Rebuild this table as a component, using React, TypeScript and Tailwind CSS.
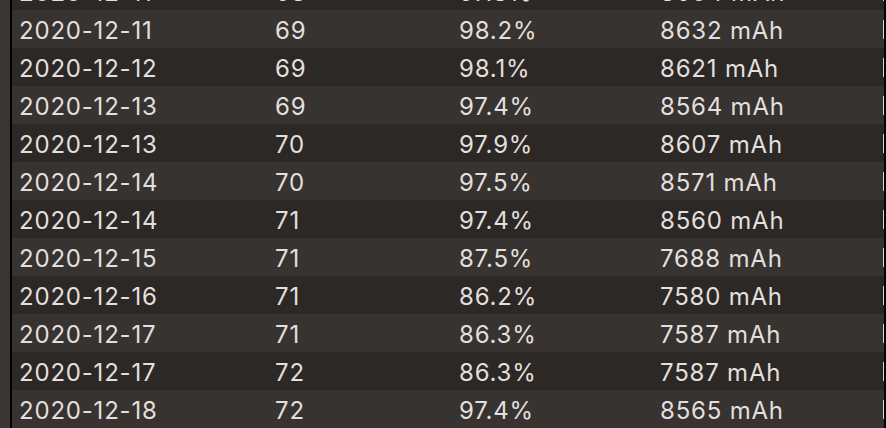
import React from 'react';

type Row = { date: string; cycles: string; health: string; capacity: string };

const rows: Row[] = [
    { date: '2020-12-11', cycles: '68', health: '97.8%', capacity: '8604 mAh' },
    { date: '2020-12-11', cycles: '69', health: '98.2%', capacity: '8632 mAh' },
    { date: '2020-12-12', cycles: '69', health: '98.1%', capacity: '8621 mAh' },
    { date: '2020-12-13', cycles: '69', health: '97.4%', capacity: '8564 mAh' },
    { date: '2020-12-13', cycles: '70', health: '97.9%', capacity: '8607 mAh' },
    { date: '2020-12-14', cycles: '70', health: '97.5%', capacity: '8571 mAh' },
    { date: '2020-12-14', cycles: '71', health: '97.4%', capacity: '8560 mAh' },
    { date: '2020-12-15', cycles: '71', health: '87.5%', capacity: '7688 mAh' },
    { date: '2020-12-16', cycles: '71', health: '86.2%', capacity: '7580 mAh' },
    { date: '2020-12-17', cycles: '71', health: '86.3%', capacity: '7587 mAh' },
    { date: '2020-12-17', cycles: '72', health: '86.3%', capacity: '7587 mAh' },
    { date: '2020-12-18', cycles: '72', health: '97.4%', capacity: '8565 mAh' },
];

const App: React.FC = () => {
    return (
        <div
            className="flex h-[428px] w-[886px] overflow-hidden bg-black"
            style={{ fontFamily: 'Inter, "Noto Sans", sans-serif' }}
        >
            {/* Sidebar edge */}
            <div className="w-[10px] shrink-0 bg-[#3a3633]"></div>
            <div className="w-[2px] shrink-0 bg-black"></div>

            {/* Table, scrolled so the first row is cut off */}
            <div className="flex min-w-0 flex-1 flex-col -mt-[28px]">
                {rows.map((row, idx) => (
                    <div
                        key={idx}
                        className={`flex h-[38px] w-full shrink-0 items-center text-[24px] leading-none tracking-[0.8px] text-[#e3dfdc] ${
                            idx % 2 === 0 ? 'bg-[#2c2826]' : 'bg-[#373330]'
                        }`}
                    >
                        <div className="w-[263px] shrink-0 pl-[7px] pt-[3px]">{row.date}</div>
                        <div className="w-[184px] shrink-0 pt-[3px]">{row.cycles}</div>
                        <div className="w-[201px] shrink-0 pt-[3px]">{row.health}</div>
                        <div className="min-w-0 flex-1 pt-[3px]">{row.capacity}</div>
                        {/* column resize divider */}
                        <div className="h-[19px] w-px shrink-0 bg-[#d9d5d2]"></div>
                    </div>
                ))}
            </div>

            <div className="w-[2px] shrink-0 bg-black"></div>
        </div>
    );
};

export default App;
